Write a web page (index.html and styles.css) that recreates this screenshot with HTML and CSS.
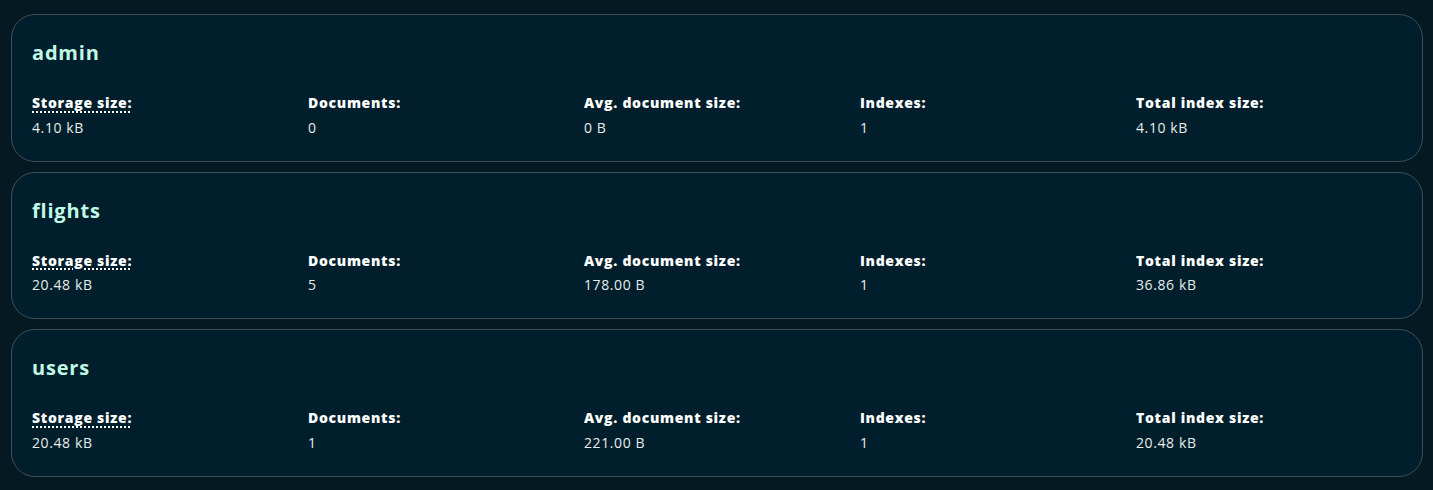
FILE: index.html
```html
<!DOCTYPE html>
<html lang="en">
<head>
<meta charset="utf-8">
<title>Collections</title>
<link rel="stylesheet" href="styles.css">
</head>
<body>
<main class="list">
  <section class="card">
    <h2 class="card-title">admin</h2>
    <div class="stats">
      <div class="stat"><div class="label tip">Storage size:</div><div class="value">4.10 kB</div></div>
      <div class="stat"><div class="label">Documents:</div><div class="value">0</div></div>
      <div class="stat"><div class="label">Avg. document size:</div><div class="value">0 B</div></div>
      <div class="stat"><div class="label">Indexes:</div><div class="value">1</div></div>
      <div class="stat"><div class="label">Total index size:</div><div class="value">4.10 kB</div></div>
    </div>
  </section>
  <section class="card">
    <h2 class="card-title">flights</h2>
    <div class="stats">
      <div class="stat"><div class="label tip">Storage size:</div><div class="value">20.48 kB</div></div>
      <div class="stat"><div class="label">Documents:</div><div class="value">5</div></div>
      <div class="stat"><div class="label">Avg. document size:</div><div class="value">178.00 B</div></div>
      <div class="stat"><div class="label">Indexes:</div><div class="value">1</div></div>
      <div class="stat"><div class="label">Total index size:</div><div class="value">36.86 kB</div></div>
    </div>
  </section>
  <section class="card">
    <h2 class="card-title">users</h2>
    <div class="stats">
      <div class="stat"><div class="label tip">Storage size:</div><div class="value">20.48 kB</div></div>
      <div class="stat"><div class="label">Documents:</div><div class="value">1</div></div>
      <div class="stat"><div class="label">Avg. document size:</div><div class="value">221.00 B</div></div>
      <div class="stat"><div class="label">Indexes:</div><div class="value">1</div></div>
      <div class="stat"><div class="label">Total index size:</div><div class="value">20.48 kB</div></div>
    </div>
  </section>
</main>
</body>
</html>
```
FILE: styles.css
```css
html, body {
  margin: 0;
  background: #041922;
}
body {
  font-family: "Open Sans", "Noto Sans", sans-serif;
  color: #e8edeb;
}
.list {
  display: flex;
  flex-direction: column;
  gap: 10px;
  padding: 14px 10px 0 11px;
}
.card {
  background: #001e2b;
  border: 1px solid #3d4f58;
  border-radius: 24px;
  padding: 24px 20px 23px 20px;
}
.card-title {
  margin: 0;
  font-size: 20px;
  line-height: 28px;
  font-weight: 700;
  color: #c0fae6;
  letter-spacing: 0.8px;
}
.stats {
  margin-top: 26px;
  display: grid;
  grid-template-columns: repeat(5, 1fr);
  column-gap: 10px;
}
.stat {
  display: flex;
  flex-direction: column;
  align-items: flex-start;
  gap: 4.5px;
}
.label {
  font-size: 14px;
  line-height: 20px;
  font-weight: 800;
  letter-spacing: 0.7px;
  color: #ffffff;
}
.label.tip {
  text-decoration: underline dotted #ffffff;
  text-decoration-thickness: 2px;
  text-underline-offset: 3px;
}
.value {
  font-size: 14px;
  line-height: 20px;
  letter-spacing: 0.6px;
  color: #e8edeb;
}
```
